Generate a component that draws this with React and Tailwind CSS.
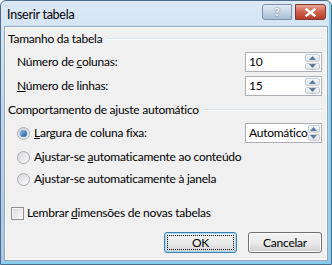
import React from 'react'

const font = { fontFamily: 'Lato, "Noto Sans", sans-serif' }

function Spin({ value }) {
  return (
    <div className="flex h-[20px] w-[77px] items-stretch border border-[#abadb3] bg-white">
      <div className="flex flex-1 items-center pl-[3px] text-[12px] text-black">{value}</div>
      <div className="flex w-[16px] flex-col gap-[1px] p-[1px] pl-0">
        <div className="flex flex-1 items-center justify-center rounded-[2px] border border-[#c8ccd3] bg-gradient-to-b from-[#f6f7f9] to-[#dfe3ea]">
          <svg width="7" height="4" viewBox="0 0 7 4"><path d="M0 4 L3.5 0 L7 4 Z" fill="#5b7aa0" /></svg>
        </div>
        <div className="flex flex-1 items-center justify-center rounded-[2px] border border-[#c8ccd3] bg-gradient-to-b from-[#f6f7f9] to-[#dfe3ea]">
          <svg width="7" height="4" viewBox="0 0 7 4"><path d="M0 0 L3.5 4 L7 0 Z" fill="#5b7aa0" /></svg>
        </div>
      </div>
    </div>
  )
}

function Radio({ checked }) {
  return (
    <div className="flex h-[13px] w-[13px] shrink-0 items-center justify-center rounded-full border border-[#a4a9b0] bg-gradient-to-br from-[#d6d6d6] to-[#fbfbfb]">
      {checked && <div className="h-[7px] w-[7px] rounded-full bg-gradient-to-br from-[#8cc0ee] to-[#1d5a94] shadow-[0_0_1px_#2b6aa8]" />}
    </div>
  )
}

function Heading({ title }) {
  return (
    <div className="flex h-[16px] items-center gap-[4px]">
      <span>{title}</span>
      <div className="h-[2px] flex-1 border-b border-white bg-[#dce3e8]" />
    </div>
  )
}

export default function App() {
  return (
    <div
      style={font}
      className="flex h-[265px] w-[332px] flex-col overflow-hidden rounded-t-[6px] border border-[#4e6b8a] bg-gradient-to-b from-[#dbe8f5] via-[#bcd4ee] to-[#a9c6e8] text-[12px] tracking-[-0.25px] text-black shadow-[inset_-2px_-2px_0_#7fcff0]"
    >
      <div className="flex h-[25px] shrink-0 justify-between pl-[6px] pr-[5px]">
        <span className="pt-[5px] text-[12.5px] text-black">Inserir tabela</span>
        <div className="flex items-start gap-[3px] pt-[3px]">
          <div className="flex h-[16px] w-[30px] items-center justify-center rounded-l-[3px] border border-[#7d92aa] bg-gradient-to-b from-[#e2ebf5] via-[#c6d5e6] to-[#a9bdd5] text-[12px] font-bold text-white [text-shadow:0_0_2px_#3b5a7e]">
            ?
          </div>
          <div className="flex h-[16px] w-[31px] items-center justify-center rounded-r-[3px] border border-[#7a3a2e] bg-gradient-to-b from-[#e6a394] via-[#d0614b] to-[#b8392a]">
            <svg width="11" height="9" viewBox="0 0 11 9">
              <path d="M1.5 1.5 L9.5 7.5 M9.5 1.5 L1.5 7.5" stroke="#ffffff" strokeWidth="2.4" strokeLinecap="square" />
            </svg>
          </div>
        </div>
      </div>
      <div className="mx-[3px] mb-[3px] flex flex-1 flex-col border border-[#8fa7c1] bg-[#f0f0f0] pl-[3px] pr-[5px] pt-[4px] shadow-[inset_0_0_0_1px_#ffffff]">
        <Heading title="Tamanho da tabela" />
        <div className="mt-[5px] flex flex-col gap-[4px] pl-[9px]">
          <div className="flex h-[20px] items-center justify-between">
            <span>Número de <u>c</u>olunas:</span>
            <Spin value="10" />
          </div>
          <div className="flex h-[20px] items-center justify-between">
            <span><u>N</u>úmero de linhas:</span>
            <Spin value="15" />
          </div>
        </div>
        <div className="mt-[6px]">
          <Heading title="Comportamento de ajuste automático" />
        </div>
        <div className="mt-[3px] flex flex-col pl-[9px]">
          <div className="flex h-[24px] items-center justify-between">
            <div className="flex items-center gap-[4px]">
              <Radio checked />
              <span><u>L</u>argura de coluna fixa:</span>
            </div>
            <Spin value="Automático" />
          </div>
          <div className="flex h-[24px] items-center gap-[4px]">
            <Radio />
            <span>Ajustar-se <u>a</u>utomaticamente ao conteúdo</span>
          </div>
          <div className="flex h-[20px] items-center gap-[4px]">
            <Radio />
            <span>Ajustar-se automaticamente à <u>j</u>anela</span>
          </div>
        </div>
        <div className="mt-[16px] flex h-[16px] items-center gap-[3px] pl-[3px]">
          <div className="h-[13px] w-[13px] shrink-0 border border-[#8e8f8f] bg-gradient-to-br from-[#d6d6d6] to-[#fbfbfb] shadow-[inset_0_0_0_1px_#f4f4f4]" />
          <span>Lembrar <u>d</u>imensões de novas tabelas</span>
        </div>
        <div className="mt-[11px] flex justify-end gap-[11px]">
          <div className="flex h-[21px] w-[73px] items-center justify-center rounded-[3px] border border-[#3c7fb1] bg-gradient-to-b from-[#f2f2f2] via-[#ebebeb] to-[#d4d4d4] p-[2px] shadow-[inset_0_0_0_1px_#a7d9f5]">
            <div className="flex h-full w-full items-center justify-center border border-dotted border-black">OK</div>
          </div>
          <div className="flex h-[21px] w-[74px] items-center justify-center rounded-[3px] border border-[#707070] bg-gradient-to-b from-[#f2f2f2] via-[#ebebeb] to-[#cfcfcf] shadow-[inset_0_0_0_1px_#fcfcfc]">
            Cancelar
          </div>
        </div>
      </div>
    </div>
  )
}
